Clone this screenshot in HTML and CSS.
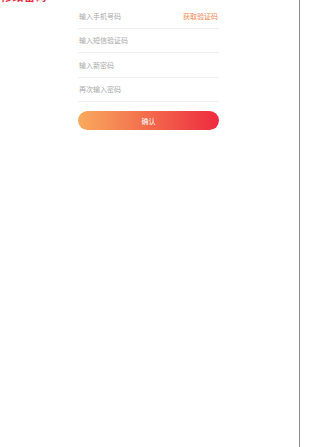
FILE: index.html
```html
<!DOCTYPE html>
<html lang="zh-CN">
<head>
<meta charset="utf-8">
<title>修改密码</title>
<link rel="stylesheet" href="styles.css">
</head>
<body>
<div class="page">
  <div class="title"><span>修改密码</span></div>
  <form class="form">
    <div class="row">
      <span class="placeholder">输入手机号码</span>
      <span class="code-link">获取验证码</span>
    </div>
    <div class="row">
      <span class="placeholder">输入短信验证码</span>
    </div>
    <div class="row">
      <span class="placeholder">输入新密码</span>
    </div>
    <div class="row">
      <span class="placeholder">再次输入密码</span>
    </div>
    <div class="submit">确认</div>
  </form>
</div>
</body>
</html>
```

FILE: styles.css
```css
html, body {
  margin: 0;
  padding: 0;
  background: #ffffff;
}
body {
  font-family: "Noto Sans CJK SC", "Noto Sans", sans-serif;
}
.page {
  width: 300px;
  height: 447px;
  box-sizing: border-box;
  border-right: 1px solid #8c8c8c;
  background: #ffffff;
  overflow: hidden;
}
.title {
  height: 4px;
  overflow: hidden;
  display: flex;
  align-items: flex-end;
  padding-left: 1px;
}
.title span {
  color: #e5293c;
  font-size: 11px;
  font-weight: bold;
  line-height: 11px;
  letter-spacing: 0.5px;
  white-space: nowrap;
  margin-bottom: 2px;
}
.form {
  width: 141px;
  margin: 0 0 0 78px;
  display: flex;
  flex-direction: column;
}
.row {
  height: 24.5px;
  box-sizing: border-box;
  border-bottom: 1px solid #efefef;
  display: flex;
  align-items: center;
  justify-content: space-between;
  padding: 1px 1px 0 1px;
}
.placeholder {
  font-size: 7px;
  color: #a9a9a9;
  line-height: 1;
}
.code-link {
  font-size: 7px;
  color: #ef8a55;
  line-height: 1;
}
.submit {
  margin-top: 9px;
  height: 19px;
  border-radius: 10px;
  background: linear-gradient(90deg, #f9aa5e 0%, #f3714d 45%, #ee2a3f 100%);
  color: #ffffff;
  font-size: 7px;
  display: flex;
  align-items: center;
  justify-content: center;
}
```
